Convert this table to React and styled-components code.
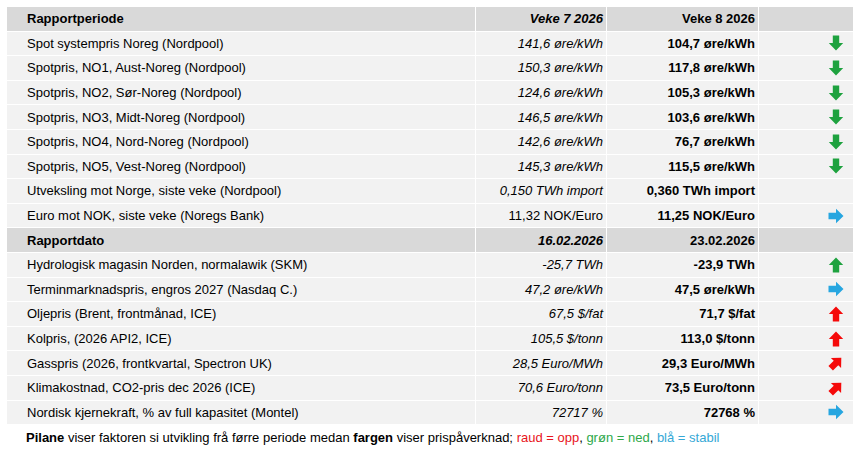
import React from "react";
import styled, { createGlobalStyle } from "styled-components";

const Global = createGlobalStyle`
  html, body { margin: 0; padding: 0; background: #fff; }
  body { font-family: Arial, "Liberation Sans", sans-serif; color: #000; }
`;

const Page = styled.div`
  padding: 6px 0 0 6px;
  width: 865px;
  box-sizing: border-box;
`;

const Table = styled.table`
  border-collapse: separate;
  border-spacing: 1px;
  font-size: 13px;
  table-layout: fixed;
  width: 848px;
`;

const Row = styled.tr`
  background: ${(p) => (p.$head ? "#d9d9d9" : "#f2f2f2")};
`;

const Cell = styled.td`
  height: 23.6px;
  padding: 0 ${(p) => (p.$pr != null ? p.$pr : 3)}px 0 ${(p) => (p.$pl != null ? p.$pl : 0)}px;
  text-align: ${(p) => p.$align || "right"};
  font-weight: ${(p) => (p.$bold ? 700 : 400)};
  font-style: ${(p) => (p.$italic ? "italic" : "normal")};
  white-space: nowrap;
  vertical-align: middle;
  box-sizing: border-box;
  line-height: 1;
`;

const ArrowBox = styled.span`
  display: inline-block;
  vertical-align: middle;
  width: 18px;
  height: 18px;
`;

const Footer = styled.p`
  margin: 5px 0 0 20px;
  font-size: 13px;
  color: #000;
`;

const Colored = styled.span`
  color: ${(p) => p.$c};
`;

const COLORS = { g: "#1ea23f", r: "#f50a0a", b: "#27a6e0" };

const Arrow = ({ dir, c }) => {
  const rot = { down: 180, up: 0, right: 90, diag: 45 }[dir];
  return (
    <ArrowBox>
      <svg width="18" height="18" viewBox="0 0 18 18">
        <path
          d="M9 1.5 L16.2 9 H12.2 V16.5 H5.8 V9 H1.8 Z"
          fill={COLORS[c]}
          transform={`rotate(${rot} 9 9)`}
        />
      </svg>
    </ArrowBox>
  );
};

const group1 = [
  ["Spot systempris Noreg (Nordpool)", "141,6 øre/kWh", "104,7 øre/kWh", "down", "g"],
  ["Spotpris, NO1, Aust-Noreg (Nordpool)", "150,3 øre/kWh", "117,8 øre/kWh", "down", "g"],
  ["Spotpris, NO2, Sør-Noreg (Nordpool)", "124,6 øre/kWh", "105,3 øre/kWh", "down", "g"],
  ["Spotpris, NO3, Midt-Noreg (Nordpool)", "146,5 øre/kWh", "103,6 øre/kWh", "down", "g"],
  ["Spotpris, NO4, Nord-Noreg (Nordpool)", "142,6 øre/kWh", "76,7 øre/kWh", "down", "g"],
  ["Spotpris, NO5, Vest-Noreg (Nordpool)", "145,3 øre/kWh", "115,5 øre/kWh", "down", "g"],
  ["Utveksling mot Norge, siste veke (Nordpool)", "0,150 TWh import", "0,360 TWh import", null, null],
  ["Euro mot NOK, siste veke (Noregs Bank)", "11,32 NOK/Euro", "11,25 NOK/Euro", "right", "b", true],
];

const group2 = [
  ["Hydrologisk magasin Norden, normalawik (SKM)", "-25,7 TWh", "-23,9 TWh", "up", "g"],
  ["Terminmarknadspris, engros 2027 (Nasdaq C.)", "47,2 øre/kWh", "47,5 øre/kWh", "right", "b"],
  ["Oljepris (Brent, frontmånad, ICE)", "67,5 $/fat", "71,7 $/fat", "up", "r"],
  ["Kolpris, (2026 API2, ICE)", "105,5 $/tonn", "113,0 $/tonn", "up", "r"],
  ["Gasspris (2026, frontkvartal, Spectron UK)", "28,5 Euro/MWh", "29,3 Euro/MWh", "diag", "r"],
  ["Klimakostnad, CO2-pris dec 2026 (ICE)", "70,6 Euro/tonn", "73,5 Euro/tonn", "diag", "r"],
  ["Nordisk kjernekraft, % av full kapasitet (Montel)", "72717 %", "72768 %", "right", "b"],
];

const DataRow = ({ r }) => (
  <Row>
    <Cell $align="left" $pl={20}>{r[0]}</Cell>
    <Cell $italic={!r[5]}>{r[1]}</Cell>
    <Cell $bold>{r[2]}</Cell>
    <Cell $pr={8}>{r[3] && <Arrow dir={r[3]} c={r[4]} />}</Cell>
  </Row>
);

const HeadRow = ({ a, b, c }) => (
  <Row $head>
    <Cell $align="left" $pl={20} $bold>{a}</Cell>
    <Cell $bold $italic>{b}</Cell>
    <Cell $bold>{c}</Cell>
    <Cell />
  </Row>
);

export default function App() {
  return (
    <Page>
      <Global />
      <Table>
        <colgroup>
          <col style={{ width: 468 }} />
          <col style={{ width: 130 }} />
          <col style={{ width: 151 }} />
          <col style={{ width: 94 }} />
        </colgroup>
        <tbody>
          <HeadRow a="Rapportperiode" b="Veke 7 2026" c="Veke 8 2026" />
          {group1.map((r) => <DataRow key={r[0]} r={r} />)}
          <HeadRow a="Rapportdato" b="16.02.2026" c="23.02.2026" />
          {group2.map((r) => <DataRow key={r[0]} r={r} />)}
        </tbody>
      </Table>
      <Footer>
        <b>Pilane</b> viser faktoren si utvikling frå førre periode medan <b>fargen</b> viser prispåverknad;{" "}
        <Colored $c="#e8141c">raud = opp</Colored>, <Colored $c="#2ea84a">grøn = ned</Colored>,{" "}
        <Colored $c="#35a8d6">blå = stabil</Colored>
      </Footer>
    </Page>
  );
}
